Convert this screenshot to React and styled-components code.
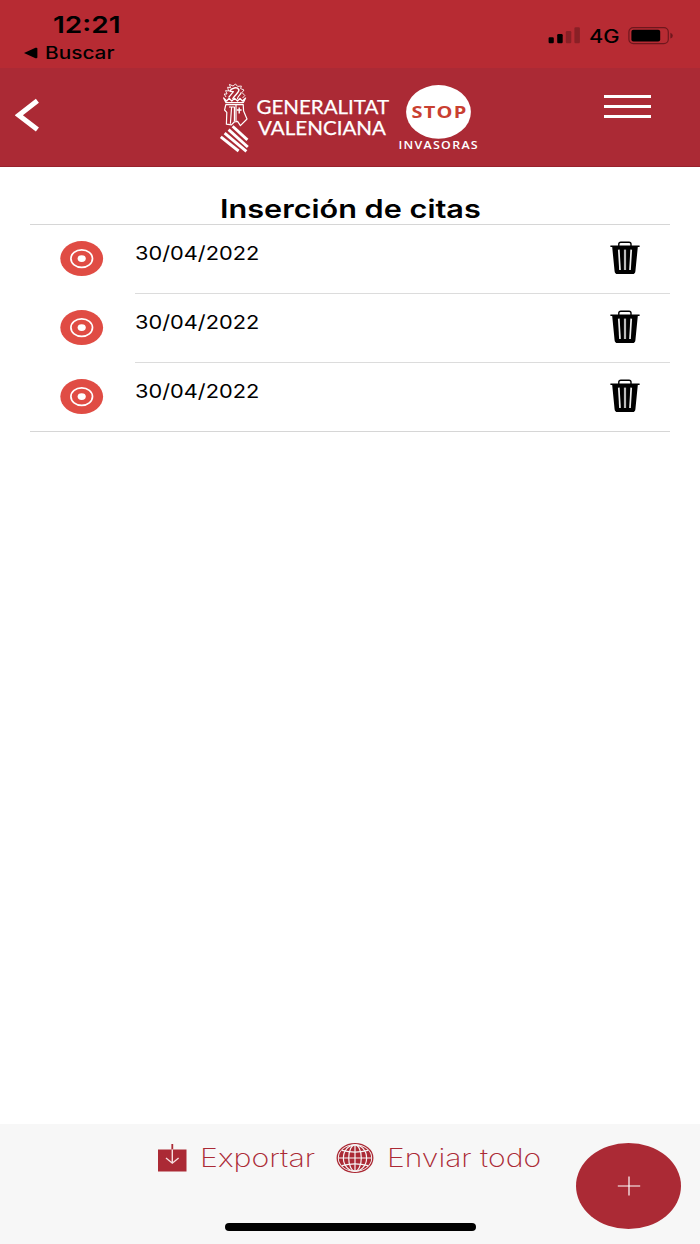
import React, { useState } from "react";
import styled, { createGlobalStyle } from "styled-components";

const GlobalStyle = createGlobalStyle`
  * {
    box-sizing: border-box;
  }

  body {
    margin: 0;
    background: #fff;
    font-family: "Inter", "Liberation Sans", sans-serif;
    color: #000;
  }

  button {
    padding: 0;
    border: none;
    background: none;
    font: inherit;
    color: inherit;
    cursor: pointer;
  }
`;

// Layout
const Screen = styled.div`
  display: flex;
  flex-direction: column;
  width: 700px;
  height: 1244px;
  overflow: hidden;
`;

// Wide lettering: the glyphs are stretched, the box keeps its own width
const Wide = styled.span`
  display: block;
  width: ${({ $width }) => $width}px;
  font-size: ${({ $size }) => $size}px;
  font-weight: ${({ $weight }) => $weight || 400};
  line-height: ${({ $line }) => $line}px;
  text-align: left;
  white-space: nowrap;
  transform: scaleX(${({ $stretch }) => $stretch});
  transform-origin: left center;
`;

// Status bar
const StatusBar = styled.div`
  display: flex;
  justify-content: space-between;
  height: 68px;
  padding: 12px 27px 0 24px;
  background: #b72b33;
`;

const StatusLeft = styled.div`
  display: flex;
  flex-direction: column;
`;

const Clock = styled.div`
  padding-left: 29px;
`;

const BackToApp = styled.div`
  display: flex;
  align-items: center;
  gap: 7px;
  margin-top: 4px;
`;

const StatusRight = styled.div`
  display: flex;
  align-items: center;
  height: 24px;
  margin-top: 12px;
`;

const SignalIcon = styled.svg`
  margin-right: 9px;
`;

// Header
const Header = styled.header`
  display: flex;
  align-items: flex-start;
  justify-content: space-between;
  height: 99px;
  padding: 0 49px 0 15px;
  background: #ab2a35;
  border-bottom: 1px solid #97222d;
`;

const BackButton = styled.button`
  display: flex;
  width: 26px;
  margin-top: 30px;
`;

const LogoWrap = styled.div`
  display: flex;
  margin: 12px 0 0 54px;
`;

const MenuButton = styled.button`
  display: flex;
  flex-direction: column;
  gap: 7px;
  width: 47px;
  margin-top: 27px;
`;

const MenuLine = styled.span`
  height: 3px;
  background: #fff;
`;

// List
const Content = styled.main`
  flex: 1;
  padding: 27px 30px 0;
`;

const Title = styled.h1`
  margin: 0;
  padding-left: 190px;
`;

const List = styled.ul`
  margin: 0;
  padding: 0;
  list-style: none;
  border-top: 1px solid #d6d6d6;
  border-bottom: 1px solid #d6d6d6;
`;

const Row = styled.li`
  display: flex;
  height: ${({ $last }) => ($last ? 68 : 69)}px;
`;

const EyeButton = styled.button`
  display: flex;
  flex: none;
  align-items: flex-start;
  width: 105px;
  padding: 16px 0 0 30px;
`;

const RowBody = styled.div`
  display: flex;
  flex: 1;
  justify-content: space-between;
  align-items: flex-start;
  padding: 16px 30px 0 0;
  border-bottom: ${({ $last }) => ($last ? "none" : "1px solid #dcdcdc")};
`;

// Footer
const Footer = styled.footer`
  display: flex;
  justify-content: space-between;
  height: 120px;
  padding-right: 19px;
  background: #f7f7f7;
`;

const FooterMain = styled.div`
  display: flex;
  flex-direction: column;
  justify-content: space-between;
  padding: 18px 0 13px 158px;
`;

const Actions = styled.div`
  display: flex;
  align-items: center;
  color: #ab2a35;
`;

const Action = styled.button`
  display: flex;
  align-items: center;
  gap: ${({ $gap }) => $gap}px;
  margin-right: ${({ $after }) => $after || 0}px;
`;

const HomeIndicator = styled.div`
  width: 251px;
  height: 8px;
  margin-left: 67px;
  border-radius: 4px;
  background: #000;
`;

const AddButton = styled.button`
  display: flex;
  align-items: center;
  justify-content: center;
  width: 105px;
  height: 86px;
  margin-top: 19px;
  border-radius: 50%;
  background: #ab2a35;
`;

const Logo = () => (
  <svg width="264" height="76" viewBox="218 80 264 76">
    {/* crest: dragon, helmet and striped shield */}
    <g fill="none" stroke="#fff" strokeWidth="1.2" strokeLinejoin="round">
      <path
        d="M226 97 L224.2 94 L227 94 L225.6 90.6 L228.6 91 L227.6 87.2 L230.6 87.8 L229.4 84.4 L233 86 L235.5 84 L237.6 86.4 L241.4 86 L240.6 88.6 L244 90 L242 92.5 L244.8 95.5 L242.6 98"
        strokeWidth="0.9"
      />
      <path d="M229.6 91.4 C231.6 87.4 237.4 86.8 238.8 89.6 C239.8 92.4 235 94.4 232.6 99" strokeWidth="1.5" />
      <path d="M229.6 91.4 L233.4 91.6 L228.6 97.5 M241.2 92.4 C241 95 237.6 95.6 237.4 99.2" strokeWidth="1.2" />
      <path d="M223.6 98 L226 102.6 H243.4 L245.6 98 L242.4 101 L240 98.3 L237.5 101 L234.5 98.3 L231.8 101 L229 98.3 L226.7 101 Z" />
      <path d="M225.8 104.6 H243.2 L243.6 111 L247 119 L240.4 125.6 L237.6 121.4 L234.2 122 L231.4 124.8 L226.4 124.2 L226.8 112.4 L224.6 110 Z" />
      <path d="M229 107 H234.4 V121.4 M231.6 107 L230.4 123.8 M236 105 V121" />
      <path d="M239.2 107.4 V113.4 M236.8 110 H241.6" strokeWidth="1.4" />
    </g>
    <g stroke="#fff" strokeWidth="2.9">
      <path d="M232.6 126.2 L247.4 139.9" />
      <path d="M228.6 129.7 L247.8 147" />
      <path d="M224.6 133.2 L246.4 151.4" />
      <path d="M220.8 136.9 L238.6 151" />
    </g>
    <g fill="#fff" stroke="#fff" strokeWidth="0.25" fontFamily="Lato, sans-serif" fontSize="18.8">
      <text x="256.5" y="114.3" textLength="132.5" lengthAdjust="spacingAndGlyphs">
        GENERALITAT
      </text>
      <text x="258" y="134.9" textLength="128" lengthAdjust="spacingAndGlyphs">
        VALENCIANA
      </text>
    </g>
    <ellipse cx="438.5" cy="111.9" rx="32.4" ry="26.8" fill="#fff" />
    <g fontFamily="'Open Sans', 'Noto Sans', sans-serif" fontWeight="700">
      <text x="411.5" y="118" fontSize="16.4" fill="#c93f31" letterSpacing="1" textLength="56" lengthAdjust="spacingAndGlyphs">
        STOP
      </text>
      <text x="398.4" y="149.2" fontSize="11.5" fontWeight="600" fill="#fff" letterSpacing="1.2" textLength="80.6" lengthAdjust="spacingAndGlyphs">
        INVASORAS
      </text>
    </g>
  </svg>
);

const EyeIcon = () => (
  <svg width="44" height="36" viewBox="0 0 44 36">
    <ellipse cx="21.7" cy="17.6" rx="21.4" ry="17.5" fill="#e04c44" />
    <ellipse cx="21.7" cy="17.6" rx="10.8" ry="8.8" fill="none" stroke="#fff" strokeWidth="1.7" />
    <ellipse cx="21.7" cy="17.6" rx="4.1" ry="3.4" fill="#fff" />
  </svg>
);

const TrashIcon = () => (
  <svg width="30" height="34" viewBox="0 0 30 34">
    <path d="M8.8 5 V3 Q8.8 1.2 10.8 1.2 H19 Q21 1.2 21 3 V5" fill="none" stroke="#000" strokeWidth="1.4" />
    <path d="M0.4 4.5 H29.6 V6.1 H27.8 L25.4 30.2 Q25.1 33 22.6 33 H7.4 Q4.9 33 4.6 30.2 L2.2 6.1 H0.4 Z" />
    <g stroke="#eee" strokeWidth="1.7">
      <path d="M8.8 8.6 L10 29" />
      <path d="M15 8.6 V29" stroke="#bbb" strokeWidth="2.2" />
      <path d="M21.2 8.6 L20 29" />
    </g>
  </svg>
);

const ExportIcon = () => (
  <svg width="29" height="28" viewBox="0 0 29 28">
    <rect x="0" y="5.5" width="28.5" height="22" fill="#ab2a35" />
    <path d="M14.3 0 V5.5" stroke="#ab2a35" strokeWidth="1.8" />
    <path d="M14.3 5.5 V19 M8 14 L14.3 19.2 L20.6 14" fill="none" stroke="#f7dfe0" strokeWidth="1.4" />
  </svg>
);

const GlobeIcon = () => (
  <svg width="38" height="32" viewBox="0 0 38 32">
    <ellipse cx="19" cy="16" rx="17.8" ry="14.4" fill="#f7f7f7" stroke="#ab2a35" strokeWidth="1.3" />
    <ellipse cx="19" cy="16" rx="16.2" ry="13" fill="#ab2a35" />
    <g fill="none" stroke="#f7f7f7" strokeWidth="1.2">
      <path d="M19 3 V29 M2.5 16 H35.5" />
      <path d="M6 8.4 Q19 11.8 32 8.4 M6 23.6 Q19 20.2 32 23.6" />
      <ellipse cx="19" cy="16" rx="6.3" ry="13.2" />
      <ellipse cx="19" cy="16" rx="11.6" ry="13.2" />
    </g>
  </svg>
);

const initialRows = [
  { id: 1, date: "30/04/2022" },
  { id: 2, date: "30/04/2022" },
  { id: 3, date: "30/04/2022" },
];

const App = () => {
  const [rows, setRows] = useState(initialRows);

  // Remove one entry from the list
  const handleDelete = (id) => {
    setRows((prev) => prev.filter((row) => row.id !== id));
  };

  return (
    <>
      <GlobalStyle />
      <Screen>
        <StatusBar>
          <StatusLeft>
            <Clock>
              <Wide $width={70} $size={22.5} $weight={600} $line={25} $stretch={1.245}>
                12:21
              </Wide>
            </Clock>
            <BackToApp>
              <svg width="14" height="12" viewBox="0 0 14 12">
                <path d="M0 6 L11.5 0.8 Q13.4 0.2 13.4 1.8 V10.2 Q13.4 11.8 11.5 11.2 Z" />
              </svg>
              <Wide $width={70} $size={16.8} $weight={450} $line={24} $stretch={1.24}>
                Buscar
              </Wide>
            </BackToApp>
          </StatusLeft>
          <StatusRight>
            <SignalIcon width="32" height="18" viewBox="0 0 32 18">
              <rect x="0.6" y="10.3" width="5.2" height="6" rx="1.2" />
              <rect x="9.2" y="7" width="5.5" height="9.3" rx="1.2" />
              <rect x="17.8" y="4" width="5.5" height="12.3" rx="1.2" opacity="0.25" />
              <rect x="26.4" y="0.2" width="5.5" height="16.1" rx="1.2" opacity="0.25" />
            </SignalIcon>
            <Wide $width={39} $size={18} $weight={450} $line={25} $stretch={1.21}>
              4G
            </Wide>
            <svg width="45" height="18" viewBox="0 0 45 18">
              <rect x="0.9" y="0.6" width="39.4" height="16" rx="4.4" fill="none" stroke="#6f171d" strokeWidth="1.2" />
              <rect x="3.4" y="2.8" width="28.8" height="11.6" rx="2" />
              <path d="M42.4 5.8 Q44.8 6.7 44.8 8.7 Q44.8 10.7 42.4 11.6 Z" fill="#6f171d" />
            </svg>
          </StatusRight>
        </StatusBar>

        <Header>
          <BackButton aria-label="Volver">
            <svg width="25" height="34" viewBox="0 0 25 34">
              <path d="M22.4 2.8 L3.8 17.2 L22.4 31.6" fill="none" stroke="#fff" strokeWidth="5" />
            </svg>
          </BackButton>
          <LogoWrap>
            <Logo />
          </LogoWrap>
          <MenuButton aria-label="Menú">
            <MenuLine />
            <MenuLine />
            <MenuLine />
          </MenuButton>
        </Header>

        <Content>
          <Title>
            <Wide $width={262} $size={25.2} $weight={600} $line={30} $stretch={1.216}>
              Inserción de citas
            </Wide>
          </Title>
          <List>
            {rows.map((row, index) => (
              <Row key={row.id} $last={index === rows.length - 1}>
                <EyeButton aria-label="Ver">
                  <EyeIcon />
                </EyeButton>
                <RowBody $last={index === rows.length - 1}>
                  <Wide $width={125} $size={19.2} $line={25} $stretch={1.135}>
                    {row.date}
                  </Wide>
                  <button aria-label="Borrar" onClick={() => handleDelete(row.id)}>
                    <TrashIcon />
                  </button>
                </RowBody>
              </Row>
            ))}
          </List>
        </Content>

        <Footer>
          <FooterMain>
            <Actions>
              <Action $gap={13} $after={21}>
                <ExportIcon />
                <Wide $width={115} $size={25.5} $weight={200} $line={30} $stretch={1.19}>
                  Exportar
                </Wide>
              </Action>
              <Action $gap={13}>
                <GlobeIcon />
                <Wide $width={154} $size={25.5} $weight={200} $line={30} $stretch={1.18}>
                  Enviar todo
                </Wide>
              </Action>
            </Actions>
            <HomeIndicator />
          </FooterMain>
          <AddButton aria-label="Añadir">
            <svg width="24" height="20" viewBox="0 0 24 20">
              <path d="M12 0.5 V19.5 M0.8 10 H23.2" stroke="#fff" strokeWidth="1.2" />
            </svg>
          </AddButton>
        </Footer>
      </Screen>
    </>
  );
};

export default App;
